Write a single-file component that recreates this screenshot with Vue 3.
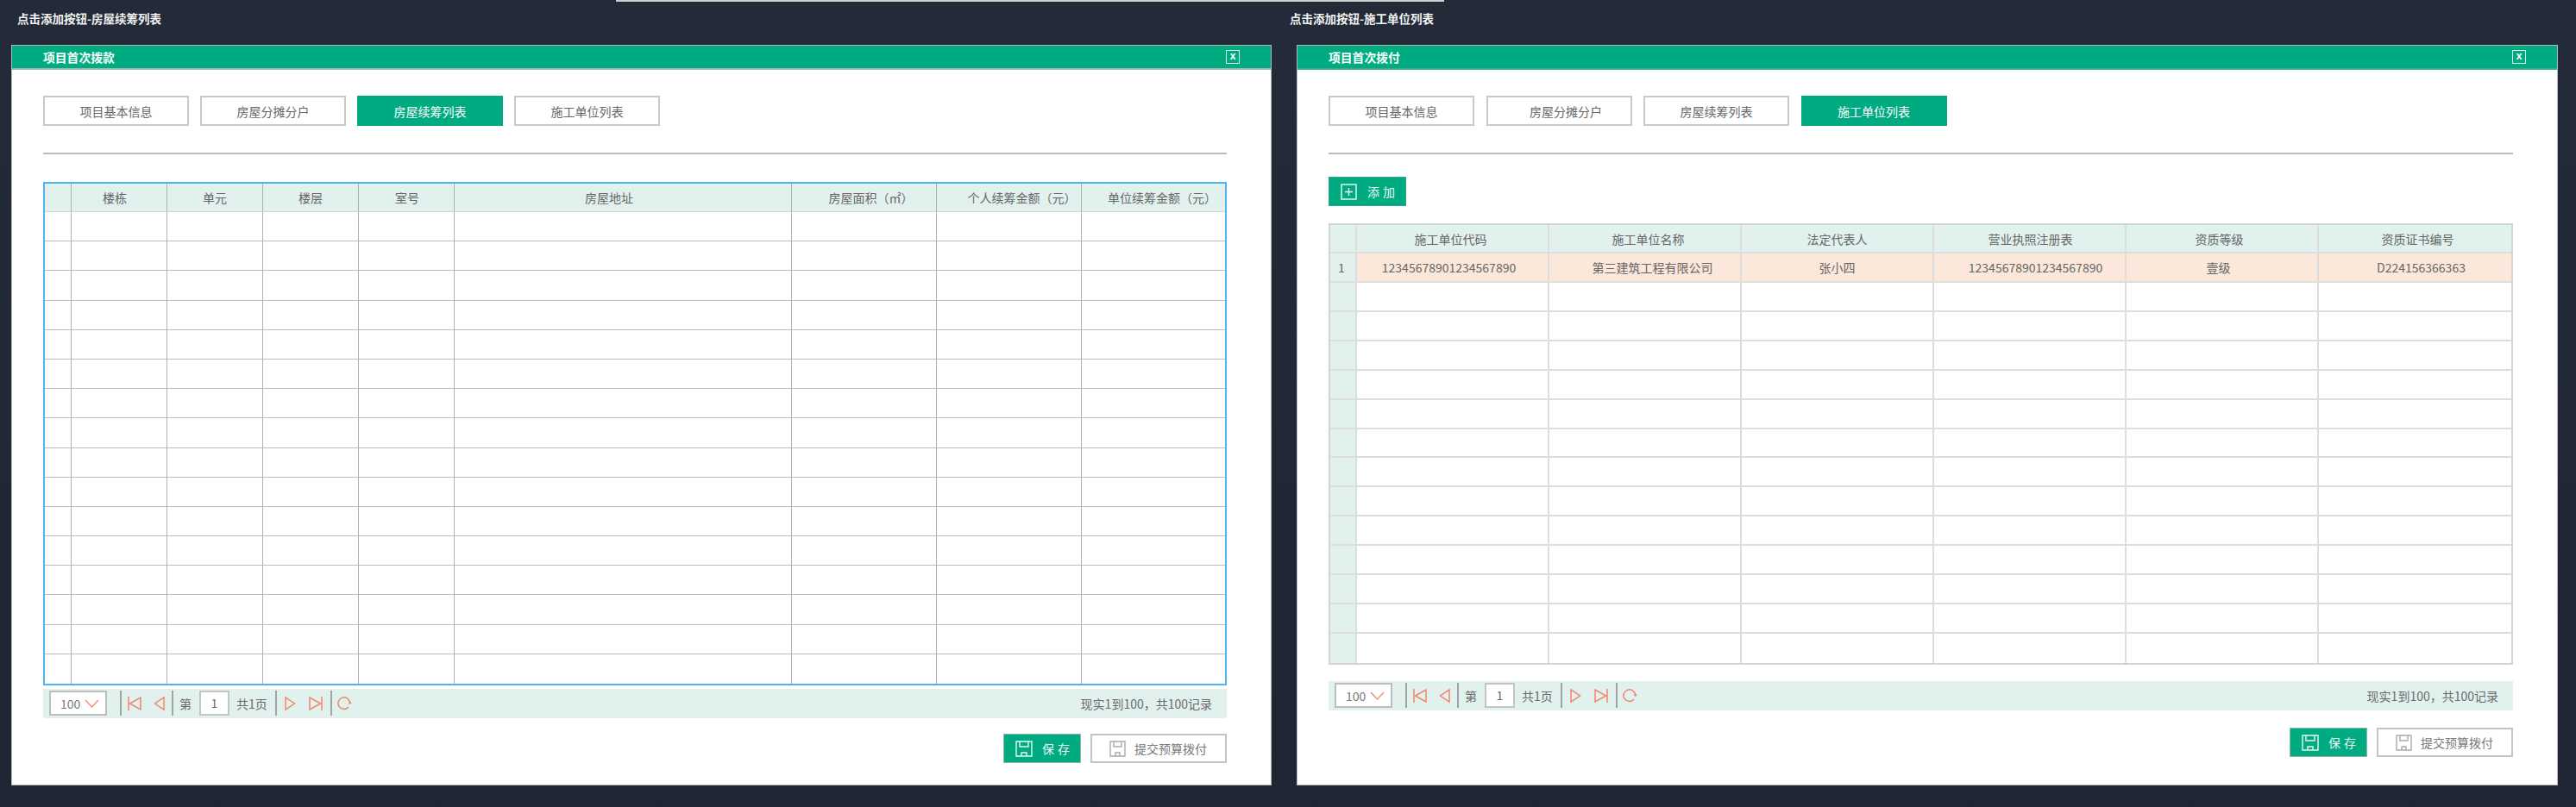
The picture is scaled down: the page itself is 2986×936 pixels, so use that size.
<script setup>
const tabLabels = ['项目基本信息', '房屋分摊分户', '房屋续筹列表', '施工单位列表']

function shiftStyle(s) {
  if (!s) return {}
  return s > 0 ? { paddingLeft: s * 2 + 'px' } : { paddingRight: -s * 2 + 'px' }
}

const panels = [
  {
    key: 'a',
    heading: '点击添加按钮-房屋续筹列表',
    title: '项目首次拨款',
    active: 2,
    tabShift: [0, 0, 0, 0],
    hasAdd: false,
    columns: [31, 111, 111, 111, 111, 391, 168, 168, 166],
    head: [['', 0], ['楼栋', -5], ['单元', 0], ['楼层', 0], ['室号', 1], ['房屋地址', -16], ['房屋面积（㎡）', 8], ['个人续筹金额（元）', 15], ['单位续筹金额（元）', 10]],
    rows: [],
    rowCount: 16
  },
  {
    key: 'b',
    heading: '点击添加按钮-施工单位列表',
    title: '项目首次拨付',
    active: 3,
    tabShift: [0, 8, 0, 0],
    hasAdd: true,
    columns: [31, 223, 223, 223, 223, 223, 223],
    head: [['', 0], ['施工单位代码', -2], ['施工单位名称', 4], ['法定代表人', 0], ['营业执照注册表', 1], ['资质等级', -3], ['资质证书编号', 3]],
    rows: [
      [['1', 0], ['12345678901234567890', -4], ['第三建筑工程有限公司', 9], ['张小四', 0], ['12345678901234567890', 7], ['壹级', -4], ['D224156366363', 7]]
    ],
    rowCount: 14
  }
]

function bodyRows(p) {
  const out = []
  for (let i = 0; i < p.rowCount; i++) {
    out.push(p.rows[i] || p.columns.map(() => ['', 0]))
  }
  return out
}
</script>

<template>
  <div class="screen">
    <div class="topline"></div>
    <div class="panels">
      <section v-for="p in panels" :key="p.key" class="panel" :class="'panel-' + p.key">
        <h2 class="heading">{{ p.heading }}</h2>
        <div class="window">
          <header class="win-head">
            <span class="win-title">{{ p.title }}</span>
            <span class="win-close">x</span>
          </header>
          <div class="win-body">
            <nav class="tabs">
              <button
                v-for="(t, i) in tabLabels"
                :key="t"
                class="tab"
                :class="{ active: i === p.active }"
                :style="shiftStyle(p.tabShift[i])"
              >{{ t }}</button>
            </nav>
            <div class="divider"></div>

            <button v-if="p.hasAdd" class="add-btn">
              <svg width="19" height="19" viewBox="0 0 19 19" fill="none" stroke="#eafaf5" stroke-width="1.4">
                <rect x="1" y="1" width="17" height="17" />
                <path d="M9.5 5v9M5 9.5h9" />
              </svg>
              <span>添加</span>
            </button>

            <div
              class="grid"
              :style="{
                gridTemplateColumns: p.columns.map((c) => c + 'px').join(' '),
                gridTemplateRows: '33px repeat(' + p.rowCount + ', 1fr)'
              }"
            >
              <template v-for="(h, i) in p.head" :key="'h' + i">
                <div class="cell head" :style="shiftStyle(h[1])">{{ h[0] }}</div>
              </template>
              <template v-for="(row, r) in bodyRows(p)" :key="'r' + r">
                <div
                  v-for="(c, i) in row"
                  :key="i"
                  class="cell"
                  :class="{ idx: i === 0, picked: p.rows[r] && i > 0, last: r === p.rowCount - 1 }"
                  :style="shiftStyle(c[1])"
                >{{ c[0] }}</div>
              </template>
            </div>

            <div class="pager">
              <div class="pg-select">
                <span>100</span>
                <svg width="17" height="10" viewBox="0 0 17 10" fill="none" stroke="#f58a70" stroke-width="1.4">
                  <path d="M1 1l7.5 8L16 1" />
                </svg>
              </div>
              <i class="sep s1"></i>
              <svg class="ic i-first" width="16" height="18" viewBox="0 0 16 18" fill="none" stroke="#f4856a" stroke-width="1.5">
                <path d="M1 1v16M15 2v14L2.500 9z" />
              </svg>
              <svg class="ic i-prev" width="13" height="18" viewBox="0 0 13 18" fill="none" stroke="#f4856a" stroke-width="1.5">
                <path d="M12 2v14L1.500 9z" />
              </svg>
              <i class="sep s2"></i>
              <span class="pg-text t-di">第</span>
              <div class="pg-input">1</div>
              <span class="pg-text t-total">共1页</span>
              <i class="sep s3"></i>
              <svg class="ic i-next" width="13" height="18" viewBox="0 0 13 18" fill="none" stroke="#f4856a" stroke-width="1.5">
                <path d="M1 2v14L11.500 9z" />
              </svg>
              <svg class="ic i-last" width="16" height="18" viewBox="0 0 16 18" fill="none" stroke="#f4856a" stroke-width="1.5">
                <path d="M15 1v16M1 2v14L13.500 9z" />
              </svg>
              <i class="sep s4"></i>
              <svg class="ic i-refresh" width="17" height="17" viewBox="0 0 17 17" fill="none" stroke="#f4856a" stroke-width="1.5">
                <path d="M14.500 8A6.800 6.800 0 1 0 13 13" />
                <circle cx="14.700" cy="8.300" r="1.400" fill="#f4856a" stroke="none" />
              </svg>
              <span class="pg-summary">现实1到100，共100记录</span>
            </div>

            <div class="actions">
              <button class="btn save">
                <svg width="20" height="19" viewBox="0 0 20 19" fill="none" stroke="#e6f7f1" stroke-width="1.4">
                  <path d="M1 1h18v17H1zM5 1v6h10V1M7 18v-4h6v4" />
                </svg>
                <span>保存</span>
              </button>
              <button class="btn submit">
                <svg width="19" height="19" viewBox="0 0 19 19" fill="none" stroke="#aaaaaa" stroke-width="1.4">
                  <path d="M1 1h17v17H1zM5 1v6h9V1M7 18v-4h5v4" />
                </svg>
                <span>提交预算拨付</span>
              </button>
            </div>
          </div>
        </div>
      </section>
    </div>
  </div>
</template>

<style>
html, body {
  margin: 0;
  background: #202735;
}
</style>

<style scoped>
.screen {
  width: 2986px;
  height: 936px;
  overflow: hidden;
  background: linear-gradient(#232a38, #1f2533);
  font-family: "Noto Sans CJK SC", "Noto Sans", sans-serif;
  font-size: 14px;
  color: #666;
}
.topline {
  width: 960px;
  height: 2px;
  margin-left: 714px;
  background: #cfcfcf;
}
.panels {
  display: flex;
}
.panel {
  width: 1480px;
  flex: none;
}
.panel-b {
  width: 1506px;
}
.heading {
  margin: 0 0 12px;
  height: 38px;
  line-height: 38px;
  font-size: 13.500px;
  font-weight: 700;
  color: #f2f2f2;
  white-space: nowrap;
}
.panel-a .heading { padding-left: 20px; }
.panel-b .heading { padding-left: 15px; }

.window {
  box-sizing: border-box;
  height: 859px;
  width: 1461px;
  background: #fff;
  border: 1px solid #b4b8b8;
}
.panel-a .window { margin-left: 13px; }
.panel-b .window { margin-left: 23px; width: 1462px; }

.win-head {
  box-sizing: border-box;
  display: flex;
  align-items: center;
  height: 28px;
  background: #00ab82;
  border-bottom: 2px solid #9db9ae;
  padding: 0 36px;
}
.panel-b .win-head { border-bottom-color: #3ea98c; }
.win-title {
  font-size: 13.800px;
  font-weight: 700;
  color: #f6fffb;
}
.win-close {
  margin-left: auto;
  box-sizing: border-box;
  width: 16px;
  height: 16px;
  border: 1.500px solid #dff5ee;
  color: #fff;
  font: 700 12px/12px "Liberation Sans", sans-serif;
  text-align: center;
}

.win-body {
  padding: 30px 51px 0 36px;
}
.tabs {
  display: flex;
  gap: 13px;
}
.tab {
  box-sizing: border-box;
  width: 169px;
  height: 35px;
  background: #fff;
  border: 2px solid #c9c9c9;
  color: #666;
  font: inherit;
  padding: 0;
}
.panel-b .tabs { gap: 13.500px; }
.tab.active {
  background: #00ab82;
  border-color: #00ab82;
  color: #fff;
}
.divider {
  height: 2px;
  margin-top: 31px;
  background: #bcbcbc;
}

.add-btn {
  box-sizing: border-box;
  display: flex;
  align-items: center;
  width: 90px;
  height: 34px;
  margin-top: 26px;
  padding: 0 0 0 13px;
  background: #00ab82;
  border: 1px solid #2fa688;
  color: #eafaf5;
  font: inherit;
  letter-spacing: 4px;
}
.add-btn span { margin-left: 12px; }

.grid {
  box-sizing: border-box;
  display: grid;
  height: 584px;
  margin-top: 32px;
  border: 2px solid #4fb2f2;
}
.panel-b .grid {
  height: 512px;
  margin-top: 20px;
  border: 2px solid #d2d5d5;
}
.cell {
  box-sizing: border-box;
  display: flex;
  align-items: center;
  justify-content: center;
  min-width: 0;
  white-space: nowrap;
  border-right: 1px solid #b0b0b0;
  border-bottom: 1px solid #bdbdbd;
}
.cell:nth-child(9n) { border-right: none; }
.panel-a .cell.last { border-bottom: none; }
.cell.head {
  background: #e1f1ee;
  border-bottom-color: #cfd6d4;
}
.panel-b .cell {
  border-right: 2px solid #dcdede;
  border-bottom: 2px solid #dcdede;
}
.panel-b .cell:nth-child(7n) { border-right: none; }
.panel-b .cell:nth-child(9n):not(:nth-child(7n)) { border-right: 2px solid #dcdede; }
.panel-b .cell.last { border-bottom: none; }
.panel-b .cell.idx {
  background: #e1f1ee;
  justify-content: flex-start;
  padding-left: 9px;
}
.cell.picked { background: #fbe8da; }

.pager {
  box-sizing: border-box;
  display: flex;
  align-items: center;
  height: 34px;
  margin-top: 4px;
  padding: 0 17px 1px 7px;
  background: #e1f1ee;
  color: #6a6a6a;
}
.panel-b .pager { margin-top: 19px; }
.pg-select {
  box-sizing: border-box;
  display: flex;
  align-items: center;
  width: 67px;
  height: 29px;
  padding-left: 11px;
  background: #fff;
  border: 2px solid #bdbdbd;
  color: #7a7a7a;
}
.pg-select svg { margin-left: 5px; }
.sep {
  flex: none;
  width: 2px;
  height: 29px;
  background: #9fa5a3;
}
.s1 { margin-left: 15px; }
.s2 { margin-left: 8px; }
.s3 { margin-left: 9px; }
.s4 { margin-left: 9px; }
.ic { flex: none; }
.i-first { margin-left: 7px; }
.i-prev { margin-left: 14px; }
.i-next { margin-left: 9px; }
.i-last { margin-left: 15px; }
.i-refresh { margin-left: 6px; }
.t-di { margin-left: 7px; }
.t-total { margin-left: 8px; }
.pg-text { flex: none; font-size: 14px; }
.pg-input {
  box-sizing: border-box;
  flex: none;
  width: 35px;
  height: 29px;
  margin-left: 9px;
  line-height: 25px;
  text-align: center;
  background: #fff;
  border: 2px solid #c4c4c4;
}
.pg-summary { margin-left: auto; color: #6a6a6a; }

.actions {
  display: flex;
  justify-content: flex-end;
  gap: 11px;
  margin-top: 18px;
}
.panel-b .actions { margin-top: 20px; }
.btn {
  box-sizing: border-box;
  display: flex;
  align-items: center;
  height: 34px;
  font: inherit;
}
.save {
  width: 90px;
  padding: 0 0 0 13px;
  background: #00ab82;
  border: 1px solid #8fb5a8;
  color: #e6f7f1;
  letter-spacing: 4px;
}
.save span { margin-left: 11px; }
.submit {
  width: 158px;
  padding: 0 0 0 20px;
  background: #fff;
  border: 2px solid #c4c4c4;
  color: #7a7a7a;
}
.submit span { margin-left: 10px; }
</style>
